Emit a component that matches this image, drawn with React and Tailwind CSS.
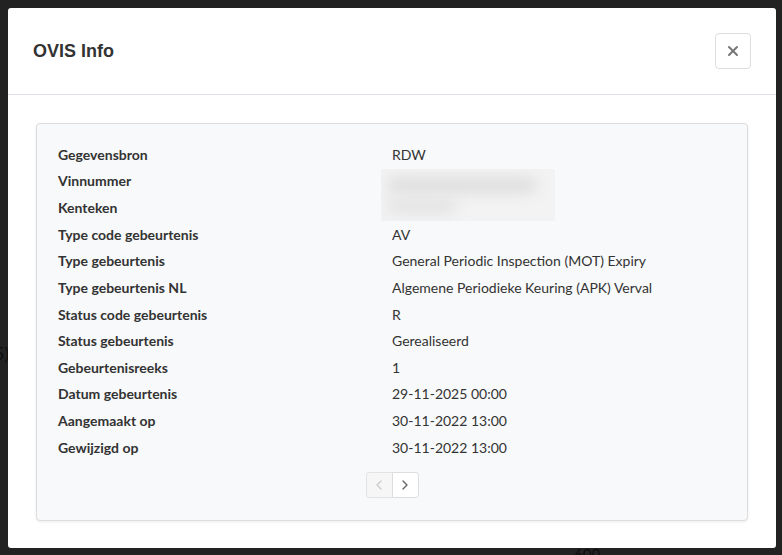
import { X, ChevronLeft, ChevronRight } from "lucide-react"

const rows = [
  { label: "Gegevensbron", value: "RDW" },
  { label: "Vinnummer", value: "", redacted: true },
  { label: "Kenteken", value: "" },
  { label: "Type code gebeurtenis", value: "AV" },
  { label: "Type gebeurtenis", value: "General Periodic Inspection (MOT) Expiry" },
  { label: "Type gebeurtenis NL", value: "Algemene Periodieke Keuring (APK) Verval" },
  { label: "Status code gebeurtenis", value: "R" },
  { label: "Status gebeurtenis", value: "Gerealiseerd" },
  { label: "Gebeurtenisreeks", value: "1" },
  { label: "Datum gebeurtenis", value: "29-11-2025 00:00" },
  { label: "Aangemaakt op", value: "30-11-2022 13:00" },
  { label: "Gewijzigd op", value: "30-11-2022 13:00" },
]

export default function App() {
  return (
    <div className="relative h-[555px] w-[782px] overflow-hidden bg-[#222222] font-['Lato','Liberation_Sans',sans-serif]">
      {/* page behind the overlay */}
      <span className="absolute left-[-6px] top-[340px] text-[18px] text-[#0e0e0e]">5)</span>
      <span className="absolute left-[574px] top-[543px] text-[15px] text-[#0e0e0e]">600</span>

      <div className="absolute left-[8px] top-[8px] flex h-[540px] w-[768px] flex-col rounded-[3px] bg-white">
        <div className="flex h-[87px] items-center justify-between border-b border-[#dee2e6] px-[25px]">
          <h2 className="font-['Liberation_Sans',Arial,sans-serif] text-[18px] font-bold text-[#333333]">OVIS Info</h2>
          <button className="flex h-[36px] w-[36px] items-center justify-center rounded-[4px] border border-[#dddddd] bg-white text-[#777777]">
            <X className="h-[16px] w-[16px]" strokeWidth={3} />
          </button>
        </div>

        <div className="px-[28px] pt-[28px]">
          <div className="rounded-[4px] border border-[#dddddd] bg-[#f8f9fa] pl-[21px] pt-[17px] pb-[22px] shadow-[0_1px_3px_rgba(0,0,0,0.08)]">
            <div className="grid grid-cols-[334px_1fr] text-[14px] text-[#333333]">
              {rows.map((row) => (
                <div key={row.label} className="contents">
                  <div className="flex h-[26.64px] items-center font-bold">{row.label}</div>
                  <div className="relative flex h-[26.64px] items-center">
                    {row.value}
                    {row.redacted && (
                      <div className="absolute left-[-11px] top-[1px] z-10 h-[52px] w-[174px] overflow-hidden bg-[#f3f3f3]">
                        <div className="absolute left-[6px] top-[8px] h-[16px] w-[150px] rounded-full bg-[#dedede] blur-[7px]" />
                        <div className="absolute left-[6px] top-[30px] h-[14px] w-[70px] rounded-full bg-[#e2e2e2] blur-[7px]" />
                      </div>
                    )}
                  </div>
                </div>
              ))}
            </div>

            <div className="mt-[11px] flex justify-center pr-[21px]">
              <div className="flex">
                <button className="flex h-[26px] w-[27px] items-center justify-center rounded-l-[3px] border border-[#e3e3e3] bg-[#f6f6f6] text-[#cccccc]">
                  <ChevronLeft className="h-[16px] w-[16px]" strokeWidth={2} />
                </button>
                <button className="-ml-px flex h-[26px] w-[27px] items-center justify-center rounded-r-[3px] border border-[#dddddd] bg-white text-[#666666]">
                  <ChevronRight className="h-[16px] w-[16px]" strokeWidth={2} />
                </button>
              </div>
            </div>
          </div>
        </div>
      </div>
    </div>
  )
}
